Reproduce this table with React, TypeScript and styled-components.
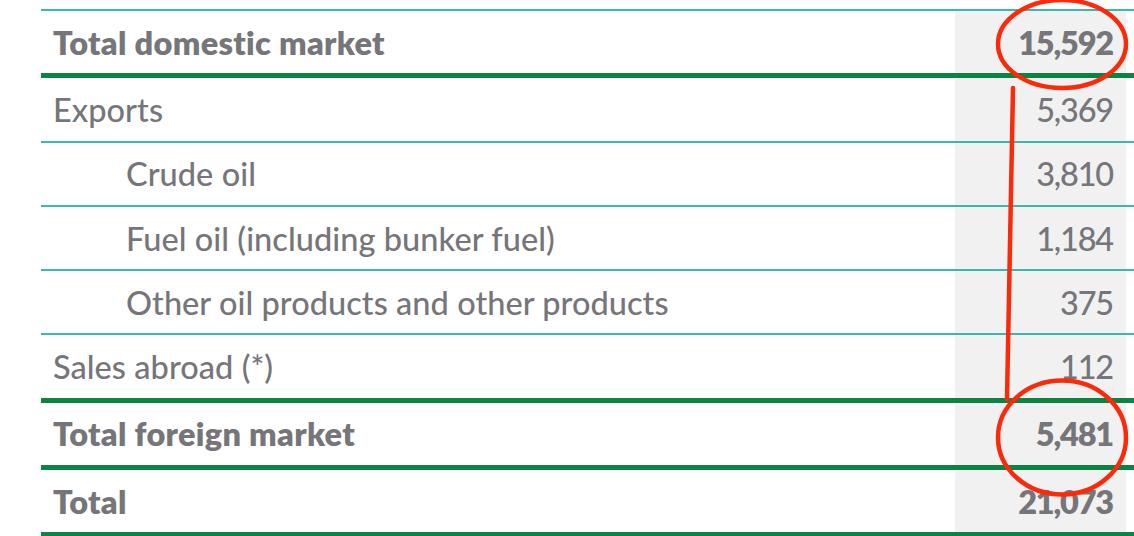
import React from "react";
import styled, { createGlobalStyle } from "styled-components";

const Global = createGlobalStyle`
  html, body { margin: 0; padding: 0; background: #ffffff; }
  body { font-family: "Lato", "Liberation Sans", sans-serif; }
`;

const Page = styled.div`
  position: relative;
  width: 1134px;
  height: 536px;
  overflow: hidden;
  padding: 9px 0 0 41px;
  box-sizing: border-box;
`;

const Table = styled.div`
  display: flex;
  flex-direction: column;
  border-top: 2px solid #3bb8aa;
`;

type Kind = "teal" | "green";

const Row = styled.div<{ $border: Kind }>`
  display: grid;
  grid-template-columns: 1fr 171px 8px;
  height: 62.3px;
  border-bottom: ${(p) => (p.$border === "green" ? "5px solid #0b8342" : "2px solid #3bb8aa")};
`;

const Label = styled.div<{ $bold?: boolean; $indent?: boolean }>`
  display: flex;
  align-items: center;
  padding-left: ${(p) => (p.$indent ? "85px" : "12px")};
  font-size: 32.5px;
  font-weight: ${(p) => (p.$bold ? 800 : 500)};
  letter-spacing: ${(p) => (p.$bold ? "0.3px" : "0.05px")};
  color: #75757a;
`;

const Value = styled.div<{ $bold?: boolean }>`
  display: flex;
  align-items: center;
  justify-content: flex-end;
  padding-right: 13px;
  background: #f1f1f1;
  font-size: 32.5px;
  font-weight: ${(p) => (p.$bold ? 800 : 500)};
  letter-spacing: -1.2px;
  color: #75757a;
`;

const Spacer = styled.div``;

const Overlay = styled.svg`
  position: absolute;
  left: 0;
  top: 0;
  pointer-events: none;
`;

const rows: { label: string; value: string; bold?: boolean; indent?: boolean; border: Kind }[] = [
  { label: "Total domestic market", value: "15,592", bold: true, border: "green" },
  { label: "Exports", value: "5,369", border: "teal" },
  { label: "Crude oil", value: "3,810", indent: true, border: "teal" },
  { label: "Fuel oil (including bunker fuel)", value: "1,184", indent: true, border: "teal" },
  { label: "Other oil products and other products", value: "375", indent: true, border: "teal" },
  { label: "Sales abroad (*)", value: "112", border: "green" },
  { label: "Total foreign market", value: "5,481", bold: true, border: "green" },
  { label: "Total", value: "21,073", bold: true, border: "green" },
];

export default function App() {
  return (
    <>
      <Global />
      <Page>
        <Table>
          {rows.map((r) => (
            <Row key={r.label} $border={r.border}>
              <Label $bold={r.bold} $indent={r.indent}>{r.label}</Label>
              <Value $bold={r.bold}>{r.value}</Value>
              <Spacer />
            </Row>
          ))}
        </Table>
        <Overlay width="1134" height="536" viewBox="0 0 1134 536">
          <g fill="none" stroke="#fa2a0a" strokeWidth="4.5" strokeLinecap="round">
            <ellipse cx="1062" cy="44" rx="64" ry="44" />
            <path d="M1013 88 L1007 399" />
            <ellipse cx="1062" cy="437.5" rx="64" ry="57" />
          </g>
        </Overlay>
      </Page>
    </>
  );
}
